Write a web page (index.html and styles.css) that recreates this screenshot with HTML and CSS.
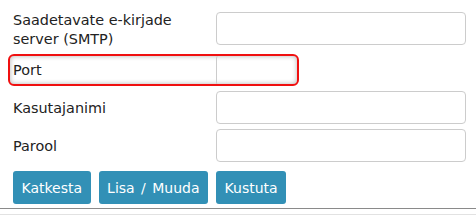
FILE: index.html
```html
<!DOCTYPE html>
<html lang="et">
<head>
    <meta charset="UTF-8">
    <title>E-posti seaded</title>
    <link rel="stylesheet" href="styles.css">
</head>
<body>
    <form class="mail-form">
        <div class="row row-tall">
            <label class="label">Saadetavate e-kirjade server (SMTP)</label>
            <input class="field" type="text">
        </div>
        <!-- esiletõstetud rida -->
        <div class="row row-marked">
            <label class="label">Port</label>
            <input class="field" type="text">
        </div>
        <div class="row">
            <label class="label">Kasutajanimi</label>
            <input class="field" type="text">
        </div>
        <div class="row">
            <label class="label">Parool</label>
            <input class="field" type="password">
        </div>
        <div class="buttons">
            <button type="button" class="btn">Katkesta</button>
            <button type="button" class="btn">Lisa / Muuda</button>
            <button type="button" class="btn">Kustuta</button>
        </div>
    </form>
    <div class="footer-line"></div>
</body>
</html>
```

FILE: styles.css
```css
body {
    margin: 0;
    background: #fff;
    font-family: "DejaVu Sans", Verdana, sans-serif;
    font-size: 14.4px;
    color: #222;
}

.mail-form {
    display: flex;
    flex-direction: column;
    gap: 5px;
    padding: 12px 0 0 13px;
}

.row {
    display: flex;
    align-items: center;
    height: 33px;
}

.row-tall {
    height: 37px;
    align-items: flex-start;
}

.label {
    flex-shrink: 0;
    width: 203px;
    line-height: 20px;
}

.row-tall .label {
    margin-top: -1px;
    line-height: 19px;
}

.field {
    flex-shrink: 0;
    box-sizing: border-box;
    width: 250px;
    height: 33px;
    margin: 0;
    border: 1px solid #ccc;
    border-radius: 4px;
    background: #fff;
}

/* punane raam Pordi rea ümber */
.row-marked {
    box-sizing: border-box;
    width: 291px;
    height: 32px;
    margin: 0 0 0 -5px;
    padding-left: 3px;
    border: 2px solid #f01010;
    border-radius: 6px;
    overflow: hidden;
    box-shadow: inset 0 0 5px rgba(0, 0, 0, 0.3);
}

.row-marked .field {
    background: transparent;
}

.buttons {
    display: flex;
    gap: 8px;
    margin-top: 4px;
}

.btn {
    height: 33px;
    padding: 0 8.5px;
    border: none;
    border-radius: 3px;
    background: #3290b6;
    color: #fff;
    font-family: "DejaVu Sans", Verdana, sans-serif;
    font-size: 14px;
    word-spacing: 2px;
}

.footer-line {
    margin-top: 4px;
    height: 5px;
    border-top: 1px solid #8a8a8a;
    border-bottom: 1px solid #e2e2e2;
}
```
